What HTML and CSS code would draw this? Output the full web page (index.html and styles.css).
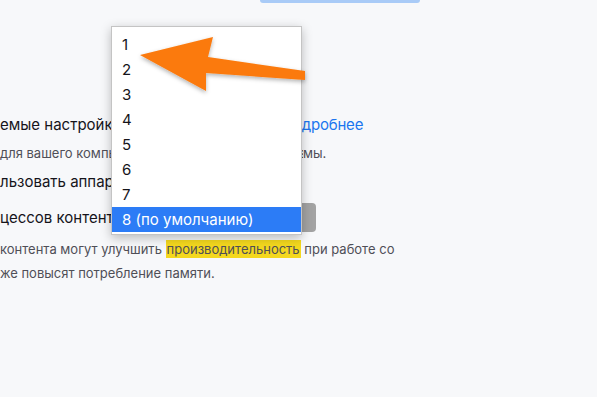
FILE: index.html
```html
<!DOCTYPE html>
<html lang="ru">

<head>
    <meta charset="UTF-8">
    <meta name="viewport" content="width=device-width, initial-scale=1.0">
    <title>Производительность</title>
    <link rel="stylesheet" href="styles.css">
</head>

<body>

    <div class="top-button"></div>

    <div id="performance">
        <div class="row">
            <span class="label label-first">емые настройки производительности</span>
            <a class="learn-more" href="#">Подробнее</a>
        </div>
        <p class="description"><span class="label-clip">для вашего компьютера автоматически выбираются систе</span>мы.</p>
        <div class="row">
            <span class="label">льзовать аппаратное ускорение</span>
        </div>
        <div class="row row-select">
            <span class="label">цессов контента</span>
            <div class="select-button"></div>
        </div>
        <p class="description description-long">контента могут улучшить <mark>производительность</mark> при работе со<br>же повысят потребление памяти.</p>
    </div>

    <!-- Open popup of the select -->
    <ul class="popup">
        <li>1</li>
        <li>2</li>
        <li>3</li>
        <li>4</li>
        <li>5</li>
        <li>6</li>
        <li>7</li>
        <li class="selected">8 (по умолчанию)</li>
    </ul>

    <!-- Annotation arrow -->
    <svg class="arrow" width="597" height="397" viewBox="0 0 597 397">
        <defs>
            <filter id="arrowShadow" x="-20%" y="-20%" width="140%" height="160%">
                <feDropShadow dx="0" dy="2" stdDeviation="2" flood-color="#000" flood-opacity="0.3"/>
            </filter>
        </defs>
        <polygon points="140,55 213,37 208,57 305,71 305,80 206,73 206,91" fill="#fb7a0c" filter="url(#arrowShadow)"/>
    </svg>

</body>

</html>
```

FILE: styles.css
```css
body {
    font-family: Inter, "Noto Sans", sans-serif;
    background-color: #f7f8fa;
    color: #15141a;
    margin: 0;
    overflow: hidden;
}

.top-button {
    margin-left: 260px;
    width: 160px;
    height: 3px;
    background-color: #a9cbf7;
    border-radius: 0 0 4px 4px;
}

#performance {
    padding-top: 111px;
}

.row {
    display: flex;
    align-items: center;
    height: 20px;
    font-size: 15px;
    white-space: nowrap;
}

.label-first {
    width: 282px;
    overflow: hidden;
}

.learn-more {
    color: #1b76ef;
    text-decoration: none;
    letter-spacing: -0.2px;
}

.description {
    display: flex;
    margin: 9px 0 8px;
    height: 20px;
    line-height: 20px;
    font-size: 13px;
    color: #4f4f57;
    white-space: nowrap;
}

.label-clip {
    width: 303px;
    overflow: hidden;
}

.row-select {
    width: 316px;
    height: 29px;
    margin-top: 12px;
}

.select-button {
    flex: 1;
    height: 29px;
    margin-left: 10px;
    background-color: #a3a3a3;
    border-radius: 4px;
}

.description-long {
    display: block;
    margin: 5px 0 0;
    height: auto;
    line-height: 24px;
}

mark {
    background-color: #f4d81e;
    color: inherit;
    padding: 1px 1px;
}

.popup {
    position: absolute;
    left: 111px;
    top: 26px;
    width: 189px;
    margin: 0;
    padding: 5px 0 2px;
    list-style: none;
    background-color: white;
    border: 1px solid #c4c4c4;
    box-shadow: 0 3px 10px rgba(0, 0, 0, 0.25);
    font-size: 15px;
}

.popup li {
    height: 25px;
    line-height: 25px;
    padding-left: 10px;
}

.popup .selected {
    background-color: #2c7cf6;
    color: white;
}

.arrow {
    position: absolute;
    left: 0;
    top: 0;
    pointer-events: none;
}
```
